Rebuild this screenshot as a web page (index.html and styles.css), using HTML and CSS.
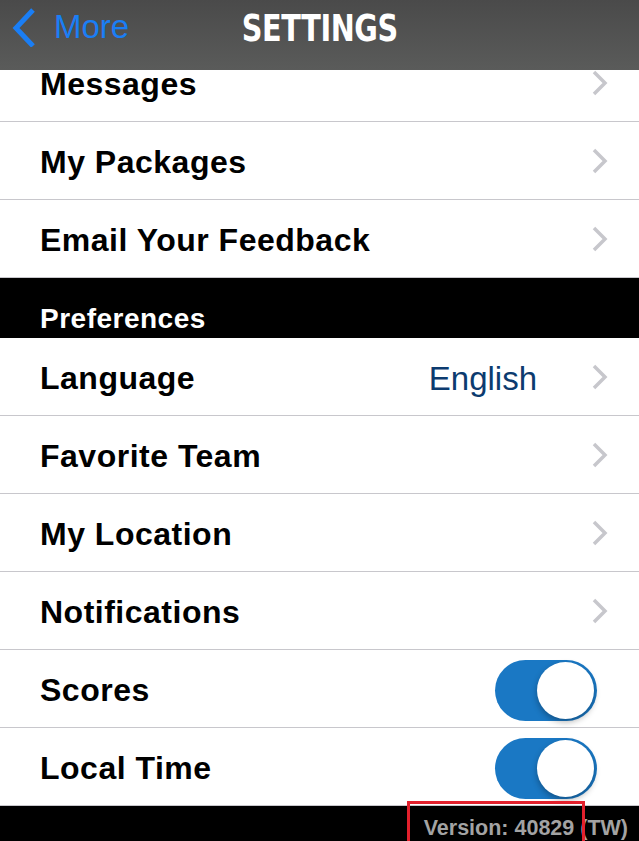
FILE: index.html
```html
<!DOCTYPE html>
<html>
<head>
<meta charset="utf-8">
<link rel="stylesheet" href="styles.css">
</head>
<body>
<div class="screen">
  <header class="navbar">
    <div class="back">
      <svg class="back-icon" width="30" height="40" viewBox="0 0 30 40"><polyline points="23,3 6,21 23,39" fill="none" stroke="#1a7ef5" stroke-width="5"/></svg>
      <span class="back-label">More</span>
    </div>
    <h1 class="title">SETTINGS</h1>
  </header>

  <main class="list">
    <div class="row"><span class="label">Messages</span><svg class="chev" width="18" height="26" viewBox="0 0 18 26"><polyline points="3,2 14,13 3,24" fill="none" stroke="#c7c7cc" stroke-width="3.5"/></svg></div>
    <div class="row"><span class="label">My Packages</span><svg class="chev" width="18" height="26" viewBox="0 0 18 26"><polyline points="3,2 14,13 3,24" fill="none" stroke="#c7c7cc" stroke-width="3.5"/></svg></div>
    <div class="row"><span class="label">Email Your Feedback</span><svg class="chev" width="18" height="26" viewBox="0 0 18 26"><polyline points="3,2 14,13 3,24" fill="none" stroke="#c7c7cc" stroke-width="3.5"/></svg></div>

    <div class="section">Preferences</div>

    <div class="row"><span class="label">Language</span><span class="value">English</span><svg class="chev" width="18" height="26" viewBox="0 0 18 26"><polyline points="3,2 14,13 3,24" fill="none" stroke="#c7c7cc" stroke-width="3.5"/></svg></div>
    <div class="row"><span class="label">Favorite Team</span><svg class="chev" width="18" height="26" viewBox="0 0 18 26"><polyline points="3,2 14,13 3,24" fill="none" stroke="#c7c7cc" stroke-width="3.5"/></svg></div>
    <div class="row"><span class="label">My Location</span><svg class="chev" width="18" height="26" viewBox="0 0 18 26"><polyline points="3,2 14,13 3,24" fill="none" stroke="#c7c7cc" stroke-width="3.5"/></svg></div>
    <div class="row"><span class="label">Notifications</span><svg class="chev" width="18" height="26" viewBox="0 0 18 26"><polyline points="3,2 14,13 3,24" fill="none" stroke="#c7c7cc" stroke-width="3.5"/></svg></div>
    <div class="row"><span class="label">Scores</span><span class="toggle"><span class="knob"></span></span></div>
    <div class="row"><span class="label">Local Time</span><span class="toggle"><span class="knob"></span></span></div>

    <footer class="footer">
      <span class="version">Version: 40829 (TW)</span>
      <span class="highlight"></span>
    </footer>
  </main>
</div>
</body>
</html>
```

FILE: styles.css
```css
html, body {
  margin: 0;
  padding: 0;
  background: #fff;
}
.screen {
  position: relative;
  width: 639px;
  height: 841px;
  overflow: hidden;
  font-family: "Liberation Sans", Arial, sans-serif;
}
.navbar {
  position: absolute;
  top: 0;
  left: 0;
  right: 0;
  height: 70px;
  background: linear-gradient(#4a4a4a, #5a5b5a);
  z-index: 2;
  display: flex;
  align-items: center;
  justify-content: center;
}
.back {
  position: absolute;
  left: 10px;
  top: 6px;
  display: flex;
  align-items: center;
  gap: 14px;
}
.back-icon {
  display: block;
}
.back-label {
  color: #1a7ef5;
  font-size: 33px;
  line-height: 42px;
}
.title {
  margin: 0;
  margin-top: -14px;
  color: #fff;
  font-family: "DejaVu Sans Condensed", "DejaVu Sans", sans-serif;
  font-stretch: condensed;
  font-weight: bold;
  font-size: 38px;
  letter-spacing: -0.5px;
  transform: scaleX(0.84);
}
.list {
  margin-top: 44px;
}
.row {
  border-bottom: 1px solid #c8c7cc;
  display: flex;
  align-items: center;
  padding: 4px 30px 0 40px;
  height: 73px;
}
.label {
  flex: 1;
  font-size: 32px;
  font-weight: bold;
  color: #000;
  letter-spacing: 0.5px;
}
.value {
  font-size: 33px;
  color: #0c3b6f;
  margin-right: 54px;
}
.chev {
  display: block;
  margin-top: -4px;
}
.section {
  height: 60px;
  background: #000;
  color: #fff;
  font-size: 28px;
  font-weight: bold;
  letter-spacing: 0.5px;
  padding-left: 40px;
  display: flex;
  align-items: flex-end;
  box-sizing: border-box;
  line-height: 38px;
}
.toggle {
  position: relative;
  width: 102px;
  height: 61px;
  border-radius: 31px;
  background: #1a78c4;
  margin-right: 12px;
  margin-top: 0;
}
.knob {
  position: absolute;
  right: 3px;
  top: 2px;
  width: 57px;
  height: 57px;
  border-radius: 50%;
  background: #fff;
  box-shadow: 0 3px 6px rgba(0,0,0,0.3);
}
.footer {
  position: relative;
  height: 36px;
  background: #000;
  display: flex;
  justify-content: flex-end;
  align-items: center;
  padding-right: 11px;
}
.version {
  color: #a3a3a3;
  font-size: 21.5px;
  font-weight: bold;
  padding-top: 9px;
}
.highlight {
  position: absolute;
  left: 407px;
  top: -5px;
  width: 172px;
  height: 42px;
  border: 3px solid #e3202c;
}
```
